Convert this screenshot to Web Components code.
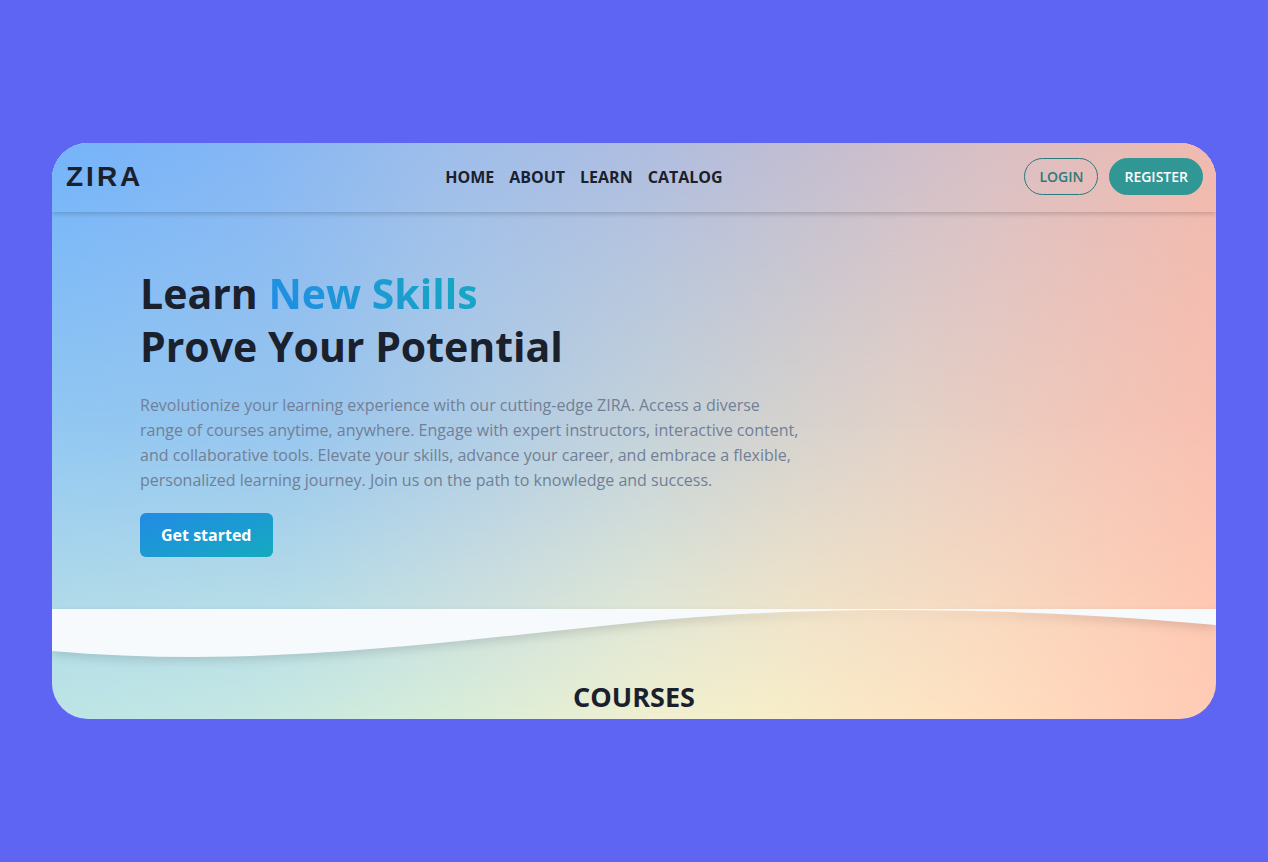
<!DOCTYPE html>
<html lang="en">
<head>
<meta charset="utf-8">
<meta name="viewport" content="width=device-width, initial-scale=1">
<title>ZIRA</title>
<style>
  body {
    margin: 0;
    min-height: 100vh;
    box-sizing: border-box;
    padding: 0 52px;
    display: flex;
    flex-direction: column;
    justify-content: center;
    background: #5e65f3;
    color: #1a202c;
    font-family: "Open Sans", "Noto Sans", sans-serif;
    font-size: 16px;
  }
</style>
</head>
<body>
<zira-page>
  <zira-nav slot="header">
    <a href="#home">HOME</a>
    <a href="#about">ABOUT</a>
    <a href="#learn">LEARN</a>
    <a href="#catalog">CATALOG</a>
    <zira-pill slot="actions">LOGIN</zira-pill>
    <zira-pill slot="actions" solid>REGISTER</zira-pill>
  </zira-nav>
  <zira-hero>
    <span slot="lead">Learn</span>
    <span slot="accent">New Skills</span>
    <span slot="rest">Prove Your Potential</span>
    <span slot="text">Revolutionize your learning experience with our cutting-edge ZIRA. Access a diverse range of courses anytime, anywhere. Engage with expert instructors, interactive content, and collaborative tools. Elevate your skills, advance your career, and embrace a flexible, personalized learning journey. Join us on the path to knowledge and success.</span>
    <span slot="action">Get started</span>
  </zira-hero>
  <zira-wave></zira-wave>
  <zira-section>COURSES</zira-section>
</zira-page>

<script>
  const define = (name, html) => {
    const template = document.createElement('template');
    template.innerHTML = html;
    customElements.define(name, class extends HTMLElement {
      constructor() {
        super();
        this.attachShadow({ mode: 'open' }).append(template.content.cloneNode(true));
      }
    });
  };

  /* Rounded card; four horizontal colour bands blend into each other downwards. */
  define('zira-page', `
    <style>
      :host {
        display: block;
        position: relative;
        isolation: isolate;
        overflow: hidden;
        border-radius: 36px;
        background: linear-gradient(90deg, #bde5e6, #c6e8e3 17%, #d8eed9 34%, #f0f0d0 51%, #f7efca 61%, #ffe2c2 78%, #ffcbb5);
      }
      .band { position: absolute; inset: 0; z-index: -1; }
      .low {
        background: linear-gradient(90deg, #b0daea, #b7dde8 21%, #cde0df 37%, #dfe6d6 51%, #efe3ca 64%, #f8d9c0 81%, #ffc8b3);
        mask-image: linear-gradient(#000 80%, transparent);
      }
      .mid {
        background: linear-gradient(90deg, #92c8f2, #98c6ee 21%, #b0cde6 37%, #c4d2da 51%, #d5d3cf 63%, #e3d2c8 73%, #f0c9bc 86%, #f9c0b1);
        mask-image: linear-gradient(#000 50%, transparent 80%);
      }
      .top {
        background: linear-gradient(90deg, #74b3fa, #85b6f4 17%, #9dbdea 33%, #aebde0 51%, #c0bdd2 64%, #d9bfc4 81%, #f0b9ae);
        mask-image: linear-gradient(#000, transparent 50%);
      }
    </style>
    <div class="band low"></div>
    <div class="band mid"></div>
    <div class="band top"></div>
    <slot name="header"></slot>
    <main><slot></slot></main>
  `);

  define('zira-nav', `
    <style>
      :host { display: block; }
      header {
        display: flex;
        justify-content: space-between;
        align-items: center;
        padding: 15px 13px 17px 14px;
        box-shadow: 0 2px 5px rgba(0, 0, 0, .18);
      }
      .logo {
        color: inherit;
        text-decoration: none;
        font: 700 28px/36px "Liberation Sans", Arial, sans-serif;
        letter-spacing: 3px;
      }
      nav { display: flex; gap: 15px; }
      ::slotted(a) {
        color: inherit;
        text-decoration: none;
        font-size: 16px;
        line-height: 24px;
        font-weight: 700;
      }
      .actions { display: flex; gap: 11px; }
    </style>
    <header>
      <a class="logo" href="#home">ZIRA</a>
      <nav aria-label="Main"><slot></slot></nav>
      <div class="actions"><slot name="actions"></slot></div>
    </header>
  `);

  define('zira-pill', `
    <style>
      :host { display: block; }
      button {
        display: block;
        height: 37px;
        padding: 0 14px;
        border: 1px solid #2c7a7b;
        border-radius: 19px;
        background: none;
        color: #2c7a7b;
        font: 600 14px/20px "Open Sans", sans-serif;
        cursor: pointer;
      }
      :host([solid]) button { background: #319795; border-color: #319795; color: #fff; }
    </style>
    <button type="button"><slot></slot></button>
  `);

  define('zira-hero', `
    <style>
      :host { display: block; padding: 55px 88px 52px; }
      h1 { margin: 0 0 20px; font-size: 41px; line-height: 53px; font-weight: 700; }
      .accent {
        background: linear-gradient(45deg, #228be6, #15aabf);
        background-clip: text;
        -webkit-background-clip: text;
        color: transparent;
      }
      p { margin: 0 0 20px; max-width: 662px; color: #718096; font-size: 16px; line-height: 25px; }
      button {
        display: block;
        height: 44px;
        padding: 0 21px;
        border: 0;
        border-radius: 6px;
        background: linear-gradient(160deg, #228be6, #15aabf);
        color: #fff;
        font: 700 16px/24px "Open Sans", sans-serif;
        cursor: pointer;
      }
    </style>
    <h1><slot name="lead"></slot> <span class="accent"><slot name="accent"></slot></span><br><slot name="rest"></slot></h1>
    <p><slot name="text"></slot></p>
    <button type="button"><slot name="action"></slot></button>
  `);

  define('zira-wave', `
    <style>
      :host { display: block; }
      svg { display: block; width: 100%; height: 53px; filter: drop-shadow(0 4px 5px rgba(0, 0, 0, .12)); }
    </style>
    <svg viewBox="0 0 1164 53" preserveAspectRatio="none" aria-hidden="true">
      <path fill="#f7fafc" d="M0 0H1164V16C1057 6 950 1 838 1C760 1 680 4 588 13C440 28 290 48 141 48C94 48 47 46 0 42Z"/>
    </svg>
  `);

  define('zira-section', `
    <style>
      :host { display: block; padding: 17px 16px 4px; }
      h2 { margin: 0; text-align: center; font-size: 27px; line-height: 36px; font-weight: 700; }
    </style>
    <h2><slot></slot></h2>
  `);
</script>
</body>
</html>
